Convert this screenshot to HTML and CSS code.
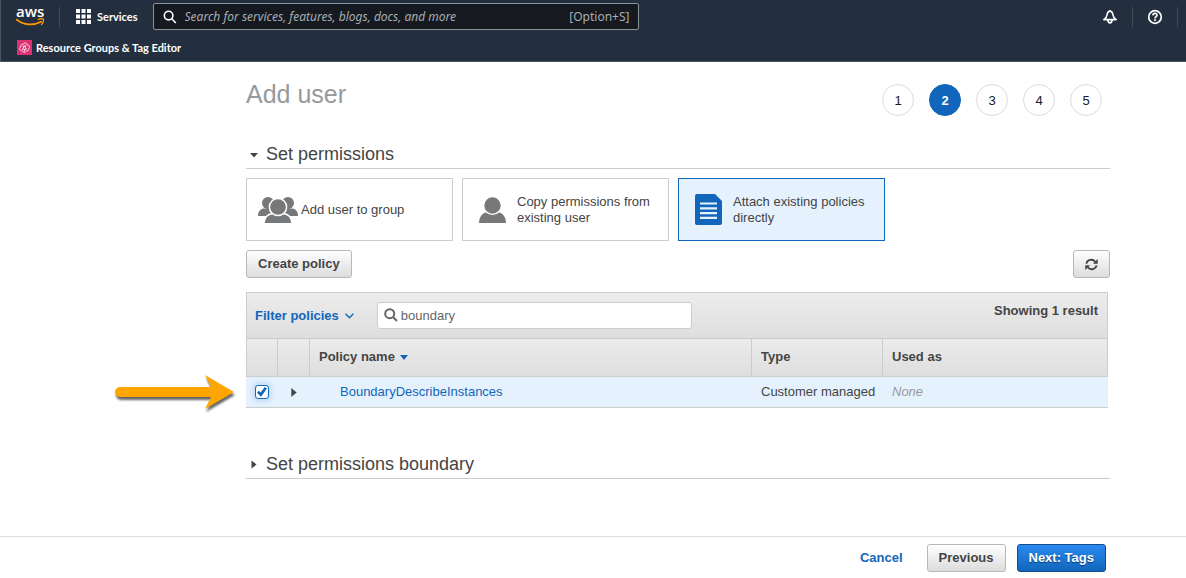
FILE: index.html
```html
<!DOCTYPE html>
<html lang="en">
<head>
<meta charset="utf-8">
<title>Add user</title>
<link rel="stylesheet" href="styles.css">
</head>
<body>
<header class="topbar">
  <div class="nav">
    <a class="logo" href="#" aria-label="aws home">
      <span class="logo-text">aws</span>
      <svg width="28" height="9" viewBox="0 0 28 9"><path d="M.6 1.6C8 7.4 17.500 7.800 25 3.700" fill="none" stroke="#f90" stroke-width="1.700" stroke-linecap="round"/><path d="M22.200 1.500c2-.9 4.600-.8 5.200-.3.500.7-.2 3.600-1.900 5.400" fill="none" stroke="#f90" stroke-width="1.300" stroke-linecap="round"/></svg>
    </a>
    <span class="divider"></span>
    <button class="services" type="button">
      <svg width="15" height="15" viewBox="0 0 15 15" fill="#fff"><path d="M0 0h4v4H0zM5.500 0h4v4h-4zM11 0h4v4h-4zM0 5.500h4v4H0zM5.500 5.500h4v4h-4zM11 5.500h4v4h-4zM0 11h4v4H0zM5.500 11h4v4h-4zM11 11h4v4h-4z"/></svg>
      Services
    </button>
    <div class="search">
      <svg width="14" height="14" viewBox="0 0 14 14" fill="none" stroke="#fff" stroke-width="1.600"><circle cx="5.600" cy="5.600" r="4.300"/><path d="M8.800 8.800l4 4.200"/></svg>
      <input class="search-input" type="text" aria-label="Search" placeholder="Search for services, features, blogs, docs, and more">
      <span class="hint">[Option+S]</span>
    </div>
    <div class="tools">
      <button class="tool" type="button" aria-label="Notifications"><svg width="16" height="16" viewBox="0 0 16 16" fill="none" stroke="#fff" stroke-width="1.600" stroke-linejoin="round"><path d="M8 2.200c-2 0-2.700 1.400-2.900 3.600-.2 2.300-1 3.300-3.300 4.800h12.400c-2.300-1.500-3.100-2.500-3.300-4.800C10.700 3.600 10 2.200 8 2.200z"/><path d="M6 11c0 3.800 4 3.800 4 0"/><path d="M8 .9v1.300"/></svg></button>
      <span class="divider"></span>
      <button class="tool" type="button" aria-label="Help"><svg width="16" height="16" viewBox="0 0 16 16" fill="none" stroke="#fff" stroke-width="1.700"><circle cx="8" cy="8" r="6.300"/><path d="M5.900 6.400C6 3.700 10.100 3.900 10 6.300 9.900 7.700 8 7.700 8 9.400M8 10.300v1.600"/></svg></button>
      <span class="divider"></span>
    </div>
  </div>
  <a class="favorite" href="#">
    <svg width="15" height="15" viewBox="0 0 15 15"><path fill="#dd2f72" d="M0 0h15v15H0z"/><g fill="none" stroke="#fff" stroke-width=".8"><path d="M4.600 10.500C2.300 10.700 1.800 7.700 3.800 7 3.200 4.800 5.300 3.800 6.200 4.300 7.300 2.200 10.300 2.900 10.300 5c2.300-.1 2.900 2.400 1.500 3.400.6 1.700-1 2.500-2 2.300-1 2-3.600 1.900-5.200-.2z"/><path d="M5.400 9.300l2-3.500 2.100 3.500zM5.600 6.200l3.800-.2M7.500 9.500v1.800"/></g></svg>
    Resource Groups &amp; Tag Editor
  </a>
</header>

<main class="content">
  <div class="title-row">
    <h1 class="title">Add user</h1>
    <ol class="steps">
      <li class="step">1</li>
      <li class="step current" aria-current="step">2</li>
      <li class="step">3</li>
      <li class="step">4</li>
      <li class="step">5</li>
    </ol>
  </div>

  <h2 class="section"><button class="section-toggle" type="button" aria-expanded="true"><svg width="10" height="10" viewBox="0 0 10 10" fill="#444"><path d="M1 4h8L5 8.500z"/></svg>Set permissions</button></h2>

  <div class="options">
    <button class="option tight" type="button">
      <svg width="40" height="26" viewBox="0 0 40 26" fill="#77787a"><circle cx="10" cy="6" r="6"/><path d="M0 19c0-4.500 2-6.500 5-7.500h8l2 7.500z"/><circle cx="30" cy="6" r="6"/><path d="M40 19c0-4.500-2-6.500-5-7.500h-8l-2 7.500z"/><g stroke="#fff" stroke-width="1.500"><path d="M6 27c0-6.500 4-10.500 9.500-10.500h9c5.500 0 9.500 4 9.500 10.500z"/><circle cx="20" cy="10" r="8.600"/></g></svg>
      <span>Add user to group</span>
    </button>
    <button class="option" type="button">
      <svg width="27" height="26" viewBox="0 0 27 26" fill="#77787a"><path d="M0 26c0-6.500 4-11 9.500-11h8c5.500 0 9.500 4.500 9.500 11z"/><circle cx="13.500" cy="8.500" r="8.900" stroke="#fff" stroke-width="1.400"/></svg>
      <span>Copy permissions from existing user</span>
    </button>
    <button class="option selected" type="button" aria-pressed="true">
      <svg width="27" height="31" viewBox="0 0 27 31"><path fill="#1166bb" d="M2 0h18l7 7v22a2 2 0 0 1-2 2H2a2 2 0 0 1-2-2V2a2 2 0 0 1 2-2z"/><path d="M5 9.500h17M5 14.300h17M5 19.100h17M5 23.900h17" stroke="#e5f2fe" stroke-width="2.200"/></svg>
      <span>Attach existing policies directly</span>
    </button>
  </div>

  <div class="actions">
    <button class="btn" type="button">Create policy</button>
    <button class="btn" type="button" aria-label="Refresh"><svg width="13" height="13" viewBox="0 0 14 14"><g fill="none" stroke="#444" stroke-width="2"><path d="M1.500 6C2.300 1.800 8.200.4 11 4.100"/><path d="M12.500 8C11.700 12.200 5.800 13.600 3 9.900"/></g><path fill="#444" d="M13.700 1v5.200H8.500zM.3 13V7.800h5.200z"/></svg></button>
  </div>

  <section class="policies">
    <div class="filter-bar">
      <button class="filter" type="button">Filter policies <svg width="9" height="6" viewBox="0 0 9 6" fill="none" stroke="#1166bb" stroke-width="1.400"><path d="M.6.8l3.900 3.900L8.400.8"/></svg></button>
      <div class="query">
        <svg width="14" height="16" viewBox="0 0 14 16" fill="none" stroke="#666" stroke-width="2"><circle cx="5.700" cy="5.700" r="4.500"/><path d="M9 9l4 4"/></svg>
        <input class="query-input" type="text" aria-label="Search policies" value="boundary">
      </div>
      <span class="count">Showing 1 result</span>
    </div>
    <table class="grid">
      <thead>
        <tr><th class="col-check"></th><th class="col-expand"></th><th class="col-name">Policy name <svg class="sort" width="8" height="6" viewBox="0 0 8 6" fill="#1166bb"><path d="M0 0h8L4 5z"/></svg></th><th class="col-type">Type</th><th>Used as</th></tr>
      </thead>
      <tbody>
        <tr>
          <td class="cell-icon"><input class="check" type="checkbox" checked aria-label="Select BoundaryDescribeInstances"></td>
          <td class="cell-icon"><button class="expand" type="button" aria-label="Expand row"><svg width="6" height="9" viewBox="0 0 6 10" fill="#444"><path d="M0 0l6 5-6 5z"/></svg></button></td>
          <td class="cell-name"><a class="link" href="#">BoundaryDescribeInstances</a></td>
          <td>Customer managed</td>
          <td class="none">None</td>
        </tr>
      </tbody>
    </table>
    <svg class="pointer" width="128" height="44" viewBox="0 0 128 44"><path fill="#ffa500" d="M9 17h91L94 5l29 17-29 17 6-12H9a5 5 0 0 1 0-10z"/></svg>
  </section>

  <h2 class="section boundary"><button class="section-toggle" type="button" aria-expanded="false"><svg width="10" height="10" viewBox="0 0 10 10" fill="#444"><path d="M2.500 1.500l5 4-5 4z"/></svg>Set permissions boundary</button></h2>
</main>

<footer class="footer">
  <a class="cancel" href="#">Cancel</a>
  <button class="btn" type="button">Previous</button>
  <button class="btn primary" type="button">Next: Tags</button>
</footer>
</body>
</html>
```
FILE: styles.css
```css
* { box-sizing: border-box; }
body {
  margin: 0;
  min-height: 100vh;
  display: flex;
  flex-direction: column;
  background: #fff;
  color: #444;
  font: 13px/16px "Liberation Sans", Arial, sans-serif;
}
button, input { font: inherit; color: inherit; }
button { border: 0; padding: 0; background: none; cursor: pointer; text-align: left; }
a { text-decoration: none; }
svg { flex: none; display: block; }

.topbar {
  background: #232f3e;
  border-bottom: 1px solid #4c535d;
  border-left: 1px solid #4c535d;
  color: #fff;
  font-family: "Noto Sans", "Open Sans", sans-serif;
  padding-bottom: 6px;
}
.nav { display: flex; align-items: center; height: 33px; }
.logo { display: flex; flex-direction: column; width: 28px; margin-left: 15px; padding-bottom: 2px; color: #fff; }
.logo-text { font: 600 15px/13px "Open Sans", sans-serif; height: 13px; text-align: center; }
.divider { width: 1px; height: 20px; background: #444a52; }
.logo + .divider { margin-left: 15px; }
.services { display: flex; align-items: center; gap: 6px; margin-left: 16px; font: 700 11px/15px Lato, sans-serif; }
.search {
  display: flex;
  align-items: center;
  width: 486px;
  height: 27px;
  margin-left: 15px;
  padding: 0 8px 0 9px;
  background: #161920;
  border: 1px solid #879596;
  border-radius: 2px;
}
.search-input { flex: 1; min-width: 0; margin-left: 8px; padding: 0; border: 0; background: none; outline: 0; font-size: 12px; }
.search-input::placeholder { color: #a5aeb0; font-style: italic; opacity: 1; }
.hint { color: #a5aeb0; font-size: 12px; }
.tools { display: flex; align-items: center; margin-left: auto; margin-right: 8px; gap: 14px; }
.favorite { display: flex; align-items: center; gap: 4px; margin: 7px 0 0 16px; color: #fff; font: 700 11px/15px Lato, sans-serif; }

.content { padding: 22px 76px 24px 246px; }
.title-row { display: flex; justify-content: space-between; height: 32px; }
.title { margin: 0; font-size: 25px; line-height: 20px; font-weight: 400; color: #959a9c; }
.steps { display: flex; gap: 15px; margin: 0 8px 0 0; padding: 0; list-style: none; }
.step { width: 32px; height: 32px; border: 1px solid #ddd; border-radius: 50%; line-height: 32px; text-align: center; color: #16191f; }
.step.current { background: #1166bb; border-color: #1166bb; color: #fff; font-weight: 700; }

.section { margin: 24px 0 9px; border-bottom: 1px solid #ccc; font-size: 18px; line-height: 28px; font-weight: 400; }
.section-toggle { display: flex; align-items: center; gap: 7px; padding-left: 3px; }
.section.boundary { margin: 42px 0 0; }

.options { display: flex; gap: 9px; }
.option { display: flex; align-items: center; gap: 11px; width: 207px; height: 63px; padding: 0 12px 0 16px; border: 1px solid #ccc; }
.option.tight { gap: 3px; padding-left: 11px; }
.option.selected { background: #e5f2fe; border-color: #1166bb; }

.actions { display: flex; justify-content: space-between; margin: 9px 0 14px; }
.btn {
  height: 28px;
  padding: 0 11px;
  border: 1px solid #b8b8b8;
  border-radius: 3px;
  background: linear-gradient(#fff, #dcdcdc);
  font-weight: 700;
}
.btn.primary { border-color: #0f4c8c; background: linear-gradient(#2a8af0, #1166bb); color: #fff; text-shadow: 0 1px 1px #0a3a6e; }

.policies { position: relative; margin-right: 2px; }
.filter-bar { display: flex; align-items: center; height: 46px; padding: 0 9px 0 8px; border: 1px solid #ccc; border-bottom: 0; background: linear-gradient(#ececec, #dedede); }
.filter { display: flex; align-items: center; gap: 6px; color: #1166bb; font-weight: 700; }
.query { display: flex; align-items: center; gap: 3px; width: 315px; height: 27px; margin-left: 23px; padding: 0 6px; border: 1px solid #ccc; border-radius: 3px; background: #fff; }
.query-input { flex: 1; min-width: 0; border: 0; padding: 0; outline: 0; background: none; color: #666; }
.count { margin-left: auto; padding-bottom: 10px; font-weight: 700; }

.grid { width: 100%; table-layout: fixed; border-collapse: separate; border-spacing: 0; }
.grid thead tr { background: linear-gradient(#ececec, #dedede); }
.grid th { height: 39px; padding: 0 9px 2px; text-align: left; border: solid #ccc; border-width: 1px 1px 1px 0; }
.grid th.col-check { width: 32px; border-left-width: 1px; }
.grid .col-expand { width: 32px; }
.grid .col-name { width: 442px; }
.grid .col-type { width: 131px; }
.sort { display: inline-block; margin-left: 2px; }
.grid td { height: 31px; padding: 0 9px; background: #e5f2fe; border-bottom: 1px solid #ccc; white-space: nowrap; }
.grid td.cell-icon { padding: 0; }
.grid td.cell-name { padding-left: 30px; }
.grid td.none { color: #999; font-style: italic; }
.link, .cancel { color: #1166bb; }
.check {
  appearance: none;
  display: grid;
  place-items: center;
  width: 14px;
  height: 14px;
  margin: 0 auto;
  border: 1px solid #1166bb;
  border-radius: 3px;
  background: #fff;
  box-shadow: 0 0 4px 3px #c6ddf7;
}
.check::before {
  content: "";
  width: 10px;
  height: 10px;
  background: #1166bb;
  clip-path: polygon(0 58%, 18% 38%, 36% 56%, 78% 0, 100% 14%, 40% 98%);
}
.expand { display: block; margin: 0 auto; }
.pointer { position: absolute; left: -135px; top: 78px; filter: drop-shadow(1px 3px 1px rgba(0, 0, 0, .6)); }

.footer { display: flex; align-items: center; justify-content: flex-end; margin-top: auto; padding: 7px 80px 6px; border-top: 1px solid #ddd; }
.cancel { margin-right: 24px; font-weight: 700; }
.btn.primary { margin-left: 11px; }
```
